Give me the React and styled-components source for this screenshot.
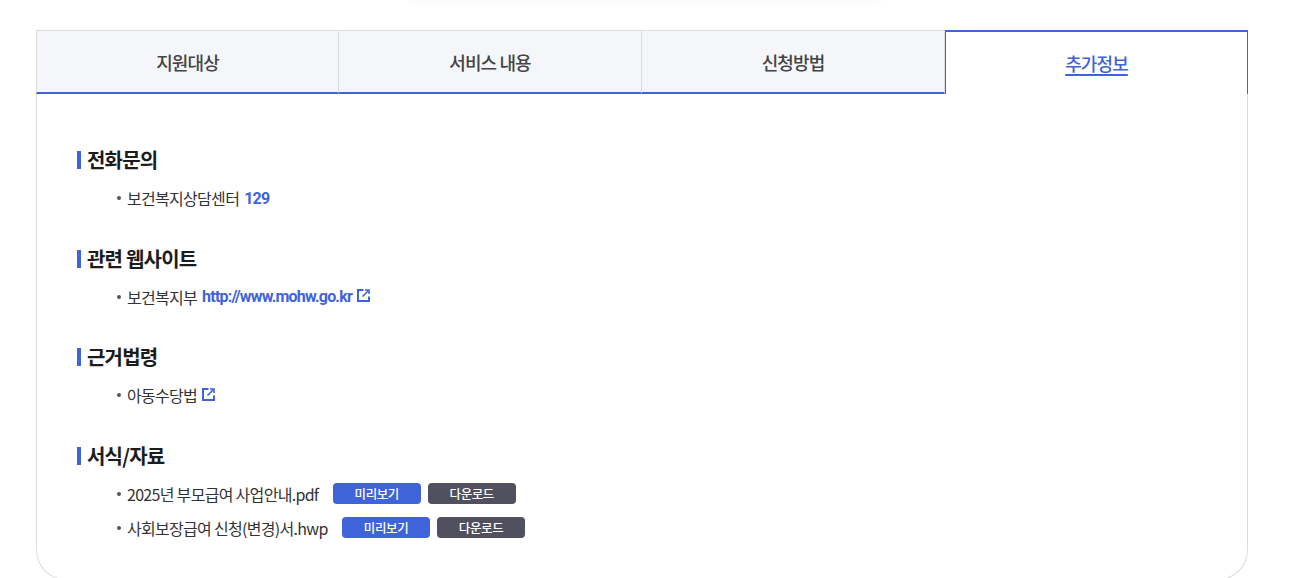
import React from 'react';
import styled, { createGlobalStyle } from 'styled-components';

const blue = '#3f63d9';

const GlobalStyle = createGlobalStyle`
  html, body {
    margin: 0;
    padding: 0;
    background: #fff;
    overflow: hidden;
  }
  body {
    font-family: "Noto Sans CJK KR", "Noto Sans", sans-serif;
  }
`;

const Page = styled.div`
  position: relative;
  width: 1310px;
  height: 578px;
  padding: 30px 62px 0 36px;
  box-sizing: border-box;
  overflow: hidden;
  &::before {
    content: '';
    position: absolute;
    left: 410px;
    width: 470px;
    top: -20px;
    height: 20px;
    box-shadow: 0 0 14px rgba(0, 0, 0, 0.035);
  }
`;

const Tabs = styled.div`
  display: grid;
  grid-template-columns: 303px 303px 303px 303px;
  height: 64px;
`;

const Tab = styled.a`
  box-sizing: border-box;
  display: flex;
  align-items: center;
  justify-content: center;
  font-size: 18px;
  font-weight: 500;
  letter-spacing: -0.9px;
  background: ${p => (p.$active ? '#fff' : '#f5f6fa')};
  color: ${p => (p.$active ? blue : '#444')};
  text-decoration: ${p => (p.$active ? 'underline' : 'none')};
  text-decoration-thickness: 2px;
  text-underline-offset: 3px;
  border-style: solid;
  border-color: ${p => (p.$active ? blue : '#dcdcdc')};
  border-width: ${p => (p.$active ? '2px 1px 0 1px' : '1px 1px 0 0')};
  border-bottom: ${p => (p.$active ? '0' : `2px solid ${blue}`)};
  ${p => p.$first && 'border-left: 1px solid #dcdcdc;'}
`;

const Panel = styled.div`
  box-sizing: border-box;
  height: 486px;
  padding: 53px 40px 0;
  border: 1px solid #dcdcdc;
  border-top: 0;
  border-radius: 0 0 30px 30px;
`;

const Section = styled.section`
  margin-bottom: 30.5px;
`;

const Heading = styled.h3`
  display: flex;
  align-items: center;
  margin: 0 0 8px;
  height: 26px;
  font-size: 20px;
  font-weight: 700;
  line-height: 26px;
  letter-spacing: -0.8px;
  color: #1c1c1c;
  &::before {
    content: '';
    width: 4px;
    height: 18px;
    margin-right: 6px;
    background: ${blue};
  }
`;

const List = styled.ul`
  list-style: none;
  margin: ${p => (p.$files ? '2px' : '0')} 0 0;
  padding: 0 0 0 40px;
`;

const Item = styled.li`
  position: relative;
  display: flex;
  align-items: center;
  height: 34px;
  padding-left: 10px;
  font-size: 16px;
  letter-spacing: -0.7px;
  color: #333;
  white-space: pre;
  &::before {
    content: '';
    position: absolute;
    left: 0;
    top: 15px;
    width: 4px;
    height: 4px;
    border-radius: 50%;
    background: #555;
  }
`;

const Accent = styled.a`
  margin-left: 5px;
  font-family: Roboto, "Noto Sans CJK KR", sans-serif;
  font-weight: 700;
  letter-spacing: -0.8px;
  color: ${blue};
  text-decoration: none;
`;

const LinkIcon = styled.svg`
  width: 13px;
  height: 13px;
  margin: 0 1px 2px 5px;
  fill: none;
  stroke: ${blue};
  stroke-width: 2;
`;

const Button = styled.button`
  box-sizing: border-box;
  width: 88px;
  height: 21px;
  margin-left: ${p => (p.$first ? '14.4px' : '7px')};
  padding: 0;
  border: 0;
  border-radius: 4px;
  background: ${p => (p.$dark ? '#50505e' : blue)};
  color: #fff;
  font-family: inherit;
  font-size: 12.5px;
  font-weight: 500;
  letter-spacing: -0.4px;
  line-height: 21px;
`;

const External = () => (
  <LinkIcon viewBox="0 0 13 13">
    <path d="M6.5 1H1v11h11V7.5" />
    <path d="M5.5 7.5 11.5 1.5" strokeWidth="1.6" />
    <path d="M8 1h4v4" strokeWidth="1.6" />
  </LinkIcon>
);

const FileRow = ({ name }) => (
  <Item>
    {name}
    <Button $first>미리보기</Button>
    <Button $dark>다운로드</Button>
  </Item>
);

const tabs = ['지원대상', '서비스 내용', '신청방법', '추가정보'];

export default function App() {
  return (
    <Page>
      <GlobalStyle />
      <Tabs>
        {tabs.map((t, i) => (
          <Tab key={t} $first={i === 0} $active={i === 3}>{t}</Tab>
        ))}
      </Tabs>
      <Panel>
        <Section>
          <Heading>전화문의</Heading>
          <List>
            <Item>보건복지상담센터<Accent>129</Accent></Item>
          </List>
        </Section>
        <Section>
          <Heading>관련 웹사이트</Heading>
          <List>
            <Item>보건복지부<Accent>http://www.mohw.go.kr</Accent><External /></Item>
          </List>
        </Section>
        <Section>
          <Heading>근거법령</Heading>
          <List>
            <Item>아동수당법<External /></Item>
          </List>
        </Section>
        <Section>
          <Heading>서식/자료</Heading>
          <List $files>
            <FileRow name="2025년 부모급여 사업안내.pdf" />
            <FileRow name="사회보장급여 신청(변경)서.hwp" />
          </List>
        </Section>
      </Panel>
    </Page>
  );
}
